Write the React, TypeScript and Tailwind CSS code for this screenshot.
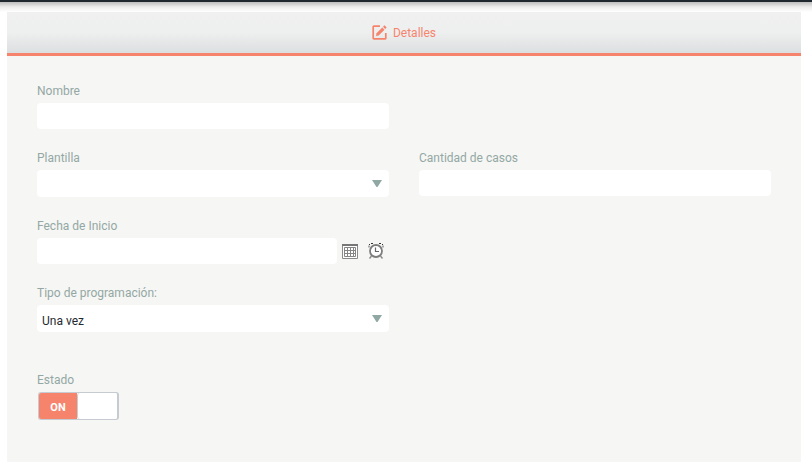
import { useState } from 'react';
import type { ReactNode } from 'react';

const boxClass = 'block h-[26px] w-full rounded-[4px] bg-white px-1 text-xs text-[#1f2b30] outline-none';

function Field({ id, label, children }: { id: string; label: string; children: ReactNode }) {
  return (
    <div>
      <label htmlFor={id} className="mb-1 block text-xs leading-4 text-[#93a8a4]">
        {label}
      </label>
      {children}
    </div>
  );
}

function SelectBox({ id, options }: { id: string; options: string[] }) {
  return (
    <div className="relative">
      <select
        id={id}
        className="block h-[27px] w-full appearance-none rounded-[4px] bg-white pt-1 pr-6 pl-[5px] text-xs text-[#1f2b30] outline-none"
      >
        {options.map((option) => (
          <option key={option}>{option}</option>
        ))}
      </select>
      <svg
        className="pointer-events-none absolute top-[10px] right-[7px] h-[7px] w-[10px]"
        viewBox="0 0 10 7"
        fill="#8fa8a3"
        aria-hidden="true"
      >
        <path d="M0 0h10L5.5 7h-1z" />
      </svg>
    </div>
  );
}

function EditIcon() {
  return (
    <svg className="h-[15px] w-[15px]" viewBox="0 0 15 15" fill="none" stroke="#f6846d" aria-hidden="true">
      <path d="M8 1.200H1.800a.6.6 0 0 0-.6.6v11.400a.6.6 0 0 0 .6.6h11.400a.6.6 0 0 0 .6-.6V8" strokeWidth="1.700" />
      <path d="M4.500 8.300 10.300 2.500l2.200 2.200-5.800 5.800-2.700.6z" fill="#f6846d" stroke="none" />
      <path d="M11 1.800 12.500.3l2.200 2.200-1.500 1.500z" fill="#f6846d" stroke="none" />
    </svg>
  );
}

function CalendarIcon() {
  return (
    <svg className="h-[15px] w-4" viewBox="0 0 16 15" aria-hidden="true">
      <path d="M.5.5h15v14H.5z" fill="#fff" stroke="#8a8a8a" />
      <path d="M0 0h16v2H0z" fill="#777" />
      <path d="M2.500 3.500h11v9h-11zM5.500 3v10M8.500 3v10M11.500 3v10M2 6.500h12M2 9.500h12" fill="none" stroke="#858585" />
    </svg>
  );
}

function ClockIcon() {
  return (
    <svg className="h-4 w-4" viewBox="0 0 16 16" fill="none" aria-hidden="true">
      <circle cx="8" cy="8" r="6" fill="#fff" stroke="#7d7d7d" strokeWidth="1.800" />
      <path d="M7.500 4.500V8.500H11" stroke="#666" strokeWidth="1.200" />
      <path d="M1 4.500V2.500M15 4.500V2.500M3.500 13 1.500 15.500M12.500 13l2 2.500" stroke="#8a8a8a" strokeWidth="1.400" />
      <path d="M1 1h1v1H1zM14 1h1v1h-1zM3 0h2v1H3zM11 0h2v1h-2z" fill="#333" />
    </svg>
  );
}

export default function App() {
  const [on, setOn] = useState(true);

  return (
    <div className="bg-white font-['Roboto','Liberation_Sans',sans-serif]">
      <div className="h-0.5 bg-[#20282f]" />
      <div className="h-[10px] bg-linear-to-b from-[#bdbdbd] via-[#ececec] to-white" />
      <main className="mr-[11px] ml-[7px] bg-[#f6f6f4]">
        <nav className="border-b-[3px] border-[#f6846d] bg-linear-to-b from-[#f0f0f0] via-[#eeefef] to-[#dcdfe0]">
          <button type="button" className="flex h-[41px] w-full items-center justify-center gap-1.5 text-xs text-[#f6846d]">
            <EditIcon />
            Detalles
          </button>
        </nav>
        <form className="px-[30px] pt-[27px] pb-[42px]">
          <div className="grid grid-cols-2 gap-x-[30px] gap-y-[21px]">
            <div className="col-span-2 grid grid-cols-2 gap-x-[30px]">
              <Field id="nombre" label="Nombre">
                <input id="nombre" type="text" className={boxClass} />
              </Field>
            </div>
            <Field id="plantilla" label="Plantilla">
              <SelectBox id="plantilla" options={['']} />
            </Field>
            <Field id="cantidad" label="Cantidad de casos">
              <input id="cantidad" type="text" className={boxClass} />
            </Field>
            <div className="col-span-2 grid grid-cols-2 gap-x-[30px]">
              <Field id="fecha" label="Fecha de Inicio">
                <div className="flex items-center">
                  <input id="fecha" type="text" className={boxClass} />
                  <button type="button" aria-label="Calendario" className="ml-[5px] shrink-0">
                    <CalendarIcon />
                  </button>
                  <button type="button" aria-label="Hora" className="mr-[5px] ml-[10px] shrink-0">
                    <ClockIcon />
                  </button>
                </div>
              </Field>
            </div>
            <Field id="tipo" label="Tipo de programación:">
              <SelectBox id="tipo" options={['Una vez']} />
            </Field>
          </div>
          <div className="mt-10">
            <Field id="estado" label="Estado">
              <label className="ml-px flex h-7 w-[81px] cursor-pointer overflow-hidden rounded-[3px] border border-r-2 border-[#c5cbd0] bg-white">
                <input
                  id="estado"
                  type="checkbox"
                  className="sr-only"
                  checked={on}
                  onChange={(event) => setOn(event.target.checked)}
                />
                {on && (
                  <span className="flex w-[38px] items-center justify-center bg-[#f6846d] pt-1 text-[11px] font-bold text-white">
                    ON
                  </span>
                )}
                <span className="w-10 rounded-[3px] border-l border-[#c5cbd0] bg-white" />
                {!on && (
                  <span className="flex w-[38px] items-center justify-center pt-1 text-[11px] font-bold text-[#93a8a4]">
                    OFF
                  </span>
                )}
              </label>
            </Field>
          </div>
        </form>
      </main>
    </div>
  );
}
